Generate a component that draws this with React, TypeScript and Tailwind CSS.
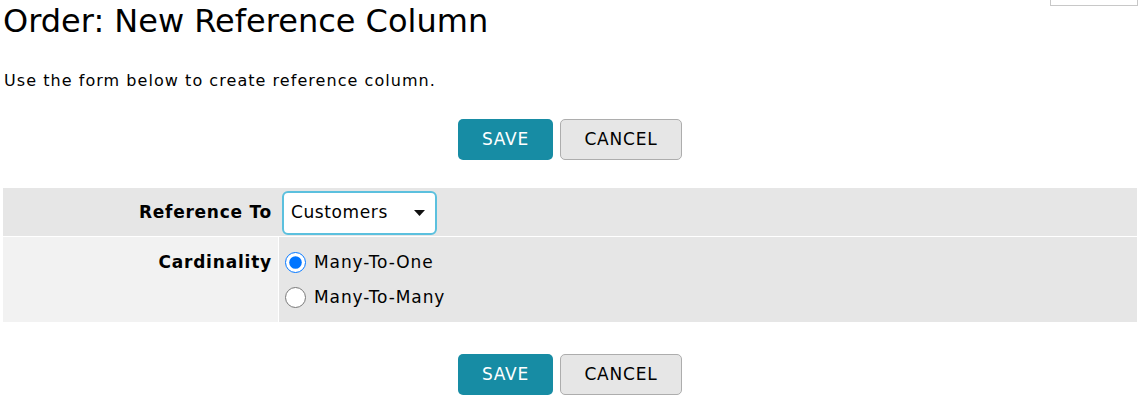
import React from 'react'

function Buttons() {
  return (
    <div className="flex justify-center gap-[7px] text-[17px] tracking-[0.8px]">
      <button className="h-[41px] w-[95px] rounded-[5px] bg-[#178ca4] text-white">SAVE</button>
      <button className="h-[41px] w-[122px] rounded-[5px] border border-[#adadad] bg-[#e6e6e6] text-black">CANCEL</button>
    </div>
  )
}

export default function App() {
  return (
    <div className="relative h-[406px] w-[1140px] overflow-hidden bg-white font-['DejaVu_Sans',sans-serif] text-black">
      <div className="absolute right-[2px] top-[-10px] h-[16px] w-[88px] border border-[#c8c8c8] bg-white" />

      <h1 className="pl-[3px] pt-[1px] text-[32px] leading-[40px]">Order: New Reference Column</h1>
      <p className="mt-[30px] pl-[4px] text-[16px] leading-[20px] tracking-[1.05px]">Use the form below to create reference column.</p>

      <div className="mt-[28px]">
        <Buttons />
      </div>

      <div className="mx-[3px] mt-[28px] flex flex-col gap-px text-[17px]">
        <div className="flex h-[48px] items-center bg-[#e6e6e6] pt-[2px]">
          <div className="w-[275px] pr-[6px] text-right font-bold tracking-[0.75px]">Reference To</div>
          <div className="ml-[4px] flex h-[44px] w-[155px] items-center justify-between rounded-[6px] border-2 border-[#5bc0de] bg-white pl-[7px] pr-[10px] tracking-[0.6px]">
            <span>Customers</span>
            <svg width="11" height="6" viewBox="0 0 11 6"><path d="M0 0h11L5.5 6z" fill="#111" /></svg>
          </div>
        </div>
        <div className="flex h-[85px]">
          <div className="w-[275px] bg-[#f2f2f2] pr-[6px] pt-[13px] text-right font-bold tracking-[0.8px]">Cardinality</div>
          <div className="ml-px flex flex-1 flex-col gap-[10px] bg-[#e6e6e6] pl-[6px] pt-[13px] tracking-[0.9px]">
            <label className="flex h-[25px] items-center gap-[8px]">
              <input type="radio" name="card" defaultChecked className="m-0 h-[21px] w-[21px] accent-[#0075ff]" />
              Many-To-One
            </label>
            <label className="flex h-[25px] items-center gap-[8px]">
              <input type="radio" name="card" className="m-0 h-[21px] w-[21px] accent-[#0075ff]" />
              Many-To-Many
            </label>
          </div>
        </div>
      </div>

      <div className="mt-[32px]">
        <Buttons />
      </div>
    </div>
  )
}
